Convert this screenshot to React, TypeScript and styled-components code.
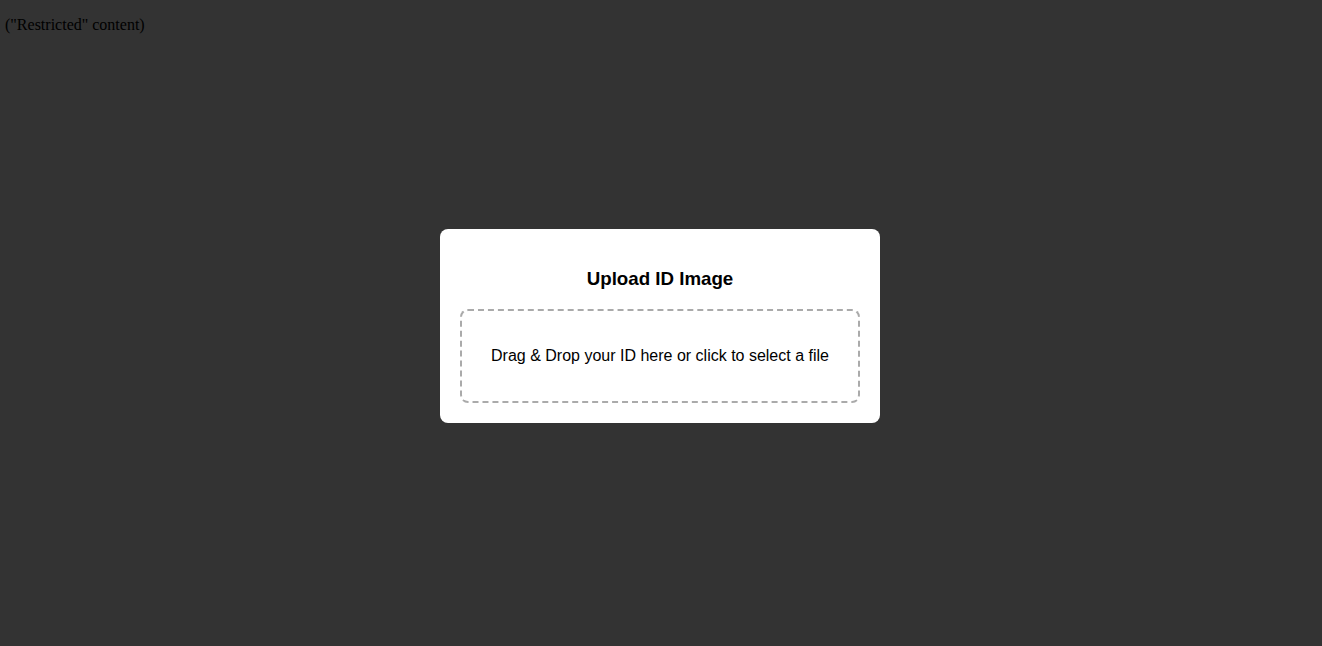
import React from "react";
import styled, { createGlobalStyle } from "styled-components";

const GlobalStyle = createGlobalStyle`
  html, body {
    margin: 0;
    padding: 0;
    background: #333333;
    font-family: "Liberation Serif", "Times New Roman", serif;
  }
`;

const Page = styled.div`
  min-height: 646px;
  box-sizing: border-box;
  padding: 16px 5px;
  color: #000;
  font-size: 16px;
  line-height: 18px;
`;

const Overlay = styled.div`
  position: fixed;
  inset: 0;
  display: flex;
  align-items: center;
  justify-content: center;
  padding-top: 6px;
  box-sizing: border-box;
`;

const Card = styled.div`
  width: 400px;
  padding: 20px;
  background: #ffffff;
  border-radius: 8px;
  font-family: "Liberation Sans", Arial, sans-serif;
  text-align: center;
  margin-left: -2px;
`;

const Title = styled.h3`
  margin: 19px 0 20px;
  font-size: 18.72px;
  line-height: 21px;
  font-weight: bold;
  color: #000;
`;

const DropZone = styled.div`
  border: 2px dashed #aaaaaa;
  border-radius: 8px;
  padding: 20px;
  cursor: pointer;
`;

const DropText = styled.p`
  margin: 16px 0;
  font-size: 16px;
  line-height: 18px;
  color: #000;
`;

export default function App() {
  return (
    <>
      <GlobalStyle />
      <Page>("Restricted" content)</Page>
      <Overlay>
        <Card>
          <Title>Upload ID Image</Title>
          <DropZone>
            <DropText>Drag &amp; Drop your ID here or click to select a file</DropText>
          </DropZone>
        </Card>
      </Overlay>
    </>
  );
}
